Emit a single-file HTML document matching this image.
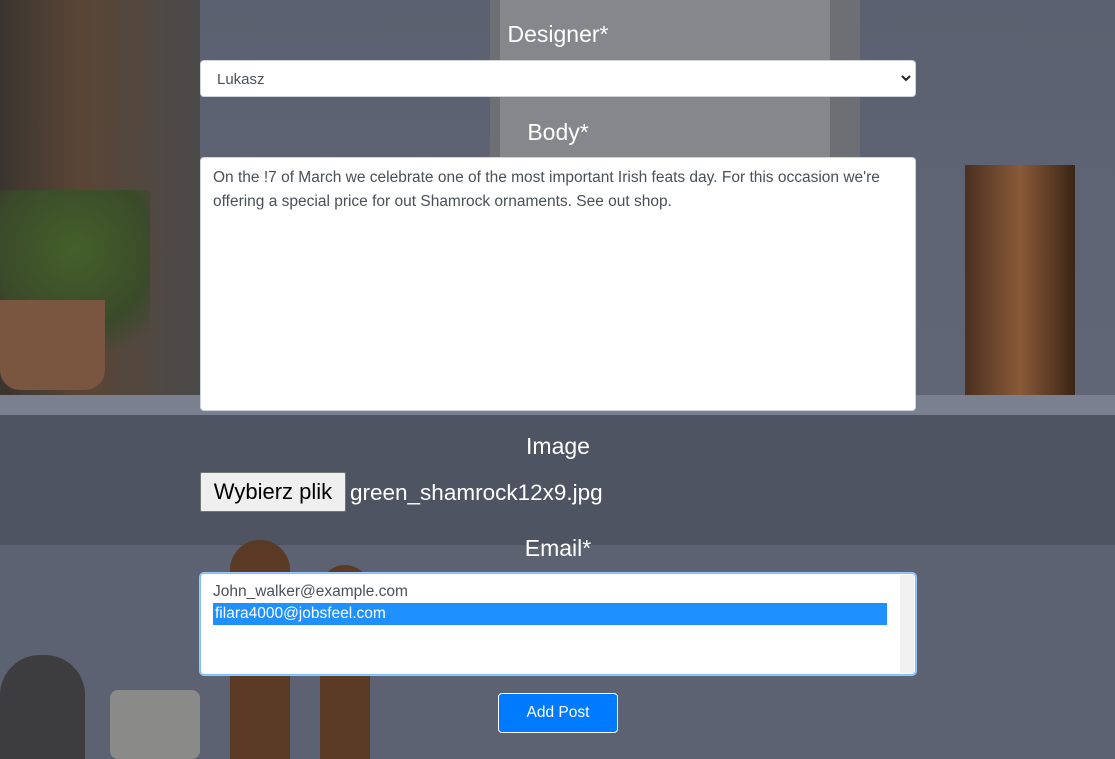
<!DOCTYPE html>
<html><head><style>
*{box-sizing:border-box;margin:0;padding:0}
body{width:1115px;height:759px;overflow:hidden;position:relative;font-family:"Liberation Sans",sans-serif;
background:linear-gradient(180deg,#5b6170 0%,#606676 50%,#5a606e 100%);}
.bg{position:absolute}
.lbl{position:absolute;left:200px;width:716px;text-align:center;color:#fff;font-size:23px}
.ctl{position:absolute;left:200px;width:716px;background:#fff;border:1px solid #ced4da;border-radius:4px}
</style></head><body>
<div class="bg" style="left:0;top:0;width:200px;height:395px;background:linear-gradient(90deg,#3a3530,#5a4535 40%,#4a4a4a)"></div>
<div class="bg" style="left:0;top:190px;width:150px;height:200px;background:radial-gradient(circle at 50% 30%,#44602a,#3a4a2a 50%,transparent 70%)"></div>
<div class="bg" style="left:0;top:300px;width:105px;height:90px;background:#7a5540;border-radius:0 0 20px 20px"></div>
<div class="bg" style="left:490px;top:0;width:370px;height:160px;background:#6e6f74"></div>
<div class="bg" style="left:500px;top:0;width:330px;height:160px;background:#86878b"></div>
<div class="bg" style="left:965px;top:165px;width:110px;height:230px;background:linear-gradient(90deg,#4a3020,#8a5a38,#3a2515)"></div>
<div class="bg" style="left:0;top:395px;width:1115px;height:20px;background:#7a8090"></div>
<div class="bg" style="left:0;top:415px;width:1115px;height:130px;background:#4e5461"></div>
<div class="bg" style="left:0;top:545px;width:1115px;height:214px;background:#5c6272"></div>
<div class="bg" style="left:0;top:655px;width:85px;height:104px;background:#3d3d40;border-radius:40px 40px 0 0"></div>
<div class="bg" style="left:110px;top:690px;width:90px;height:69px;background:#8a8a88;border-radius:8px"></div>
<div class="bg" style="left:230px;top:540px;width:60px;height:219px;background:#5a3a25;border-radius:30px 30px 0 0"></div>
<div class="bg" style="left:320px;top:565px;width:50px;height:194px;background:#5a3a25;border-radius:25px 25px 0 0"></div>

<div class="lbl" style="top:21px">Designer*</div>
<div class="ctl" style="top:60px;height:37px;font-size:15px;color:#495057;padding:10px 16px">Lukasz
<svg style="position:absolute;right:4px;top:12px" width="10" height="10" viewBox="0 0 10 10"><path d="M1 3l4 4 4-4" stroke="#222" stroke-width="2" fill="none"/></svg></div>
<div class="lbl" style="top:119px">Body*</div>
<div class="ctl" style="top:157px;height:254px;font-size:15.5px;color:#495057;padding:8px 12px;line-height:24px">On the !7 of March we celebrate one of the most important Irish feats day. For this occasion we're offering a special price for out Shamrock ornaments. See out shop.</div>
<div class="lbl" style="top:433px">Image</div>
<div style="position:absolute;left:200px;top:472px;width:146px;height:40px;background:#efefef;border:1px solid #767676;border-radius:2px;font-size:22px;color:#000;text-align:center;line-height:38px">Wybierz plik</div>
<div style="position:absolute;left:350px;top:480px;color:#fff;font-size:22.5px">green_shamrock12x9.jpg</div>
<div class="lbl" style="top:535px">Email*</div>
<div class="ctl" style="top:573px;height:102px;border:1px solid #80bdff;box-shadow:0 0 0 1px #9cc7ff;font-size:15.5px;color:#495057;padding:7px 12px">
<div style="height:22px;line-height:22px">John_walker@example.com</div>
<div style="height:22px;line-height:22px;background:#1e90ff;color:#fff;width:674px;padding-left:2px">filara4000@jobsfeel.com</div>
<div style="position:absolute;right:1px;top:1px;width:14px;height:98px;background:#f1f1f1"></div>
</div>
<div style="position:absolute;left:498px;top:693px;width:120px;height:40px;background:#007bff;border:1px solid #fff;border-radius:4px;color:#fff;font-size:15.5px;text-align:center;line-height:38px">Add Post</div>
</body></html>
